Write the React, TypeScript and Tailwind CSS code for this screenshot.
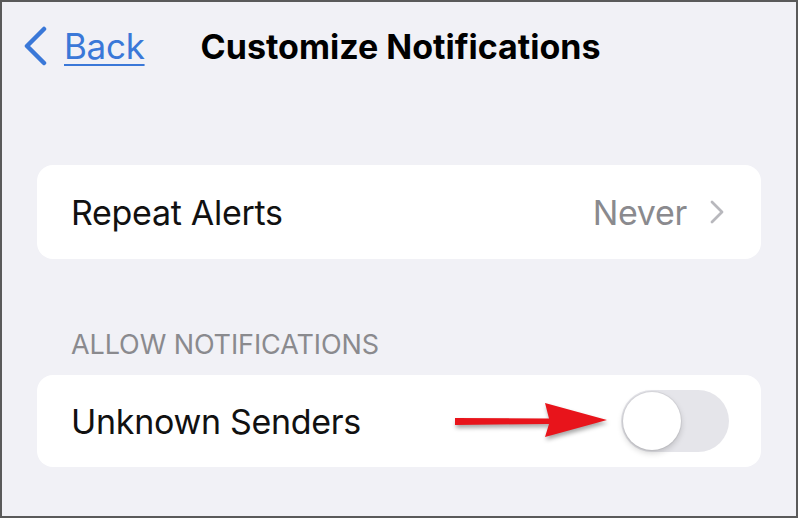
import React from 'react';

function Toggle() {
  return (
    <div className="relative h-[62px] w-[108px] rounded-full bg-[#e5e5ea]">
      <div className="absolute left-[2px] top-[2px] h-[58px] w-[58px] rounded-full bg-white shadow-[0_3px_6px_rgba(0,0,0,0.18),0_0_0_1px_rgba(0,0,0,0.05)]" />
    </div>
  );
}

function RedArrow() {
  return (
    <svg width="160" height="44" viewBox="0 0 160 44" className="drop-shadow-[1px_3px_2px_rgba(0,0,0,0.35)]">
      <path d="M2 19 L96 19.5 L92 4 L154 21 L92 38 L96 25 L2 26 Z" fill="#e8141b" />
    </svg>
  );
}

export default function App() {
  return (
    <div className="w-[800px] h-[520px] bg-white" style={{ fontFamily: 'Inter, "Liberation Sans", sans-serif' }}>
      <div className="w-[798px] h-[518px] border-2 border-[#5a5a5a] bg-[#f1f1f6] flex flex-col">
        <div className="flex items-center h-[88px] pl-[20px]">
          <svg width="26" height="40" viewBox="0 0 26 40" className="mr-[16px]">
            <path d="M22 3 L5 20 L22 37" fill="none" stroke="#3a78d8" strokeWidth="4.5" strokeLinecap="round" strokeLinejoin="round" />
          </svg>
          <span className="text-[35px] text-[#3a78d8] underline decoration-[2px] underline-offset-[5px] tracking-[-0.3px]">Back</span>
          <span className="ml-[56px] text-[34px] font-bold text-black tracking-[0px]">Customize Notifications</span>
        </div>

        <div className="mt-[75px] mx-[35px] h-[94px] rounded-[16px] bg-white flex items-center pl-[34px] pr-[36px]">
          <span className="text-[34px] text-[#111] tracking-[-0.3px]">Repeat Alerts</span>
          <span className="ml-auto text-[34px] text-[#8a8a8e] tracking-[-0.3px]">Never</span>
          <svg width="16" height="26" viewBox="0 0 16 26" className="ml-[22px]">
            <path d="M3 3 L13 13 L3 23" fill="none" stroke="#b8b8bd" strokeWidth="2.8" strokeLinecap="round" strokeLinejoin="round" />
          </svg>
        </div>

        <div className="mt-[70px] pl-[69px] text-[27px] text-[#8a8a8e] tracking-[-0.1px] leading-[32px]">ALLOW NOTIFICATIONS</div>

        <div className="mt-[14px] mx-[35px] h-[92px] rounded-[16px] bg-white flex items-center pl-[34px] pr-[32px]">
          <span className="text-[34px] text-[#111] tracking-[-0.3px]">Unknown Senders</span>
          <div className="ml-auto flex items-center">
            <RedArrow />
            <div className="ml-[8px]">
              <Toggle />
            </div>
          </div>
        </div>
      </div>
    </div>
  );
}
